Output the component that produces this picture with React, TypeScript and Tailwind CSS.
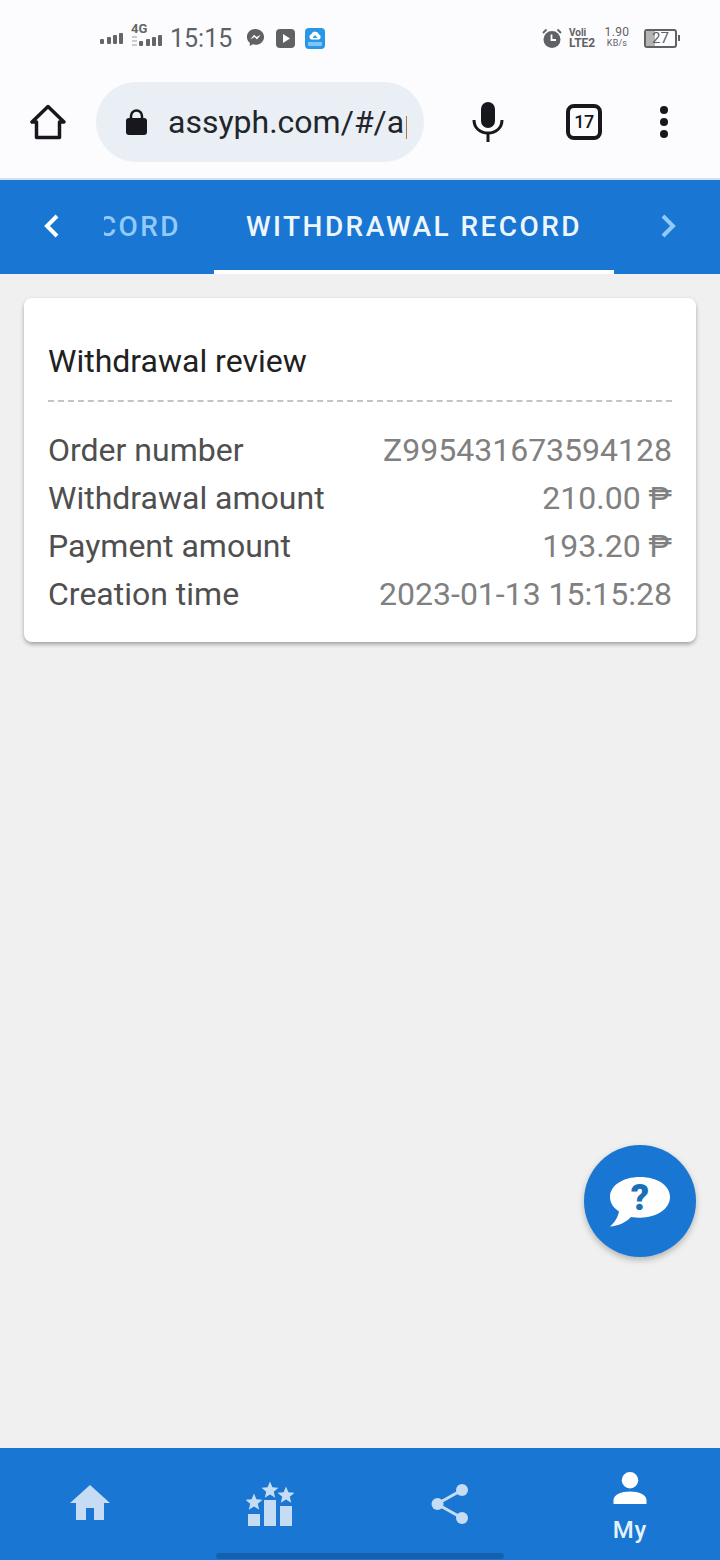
import React from 'react'

const rows = [
  { label: 'Order number', value: 'Z995431673594128' },
  { label: 'Withdrawal amount', value: '210.00 ₱' },
  { label: 'Payment amount', value: '193.20 ₱' },
  { label: 'Creation time', value: '2023-01-13 15:15:28' },
]

const star = 'M0-8.500L2.400-2.800 8.500-2.300 3.800 1.800 5.200 7.800 0 4.600-5.200 7.800-3.800 1.800-8.500-2.300-2.400-2.800z'

function SignalBars({ className }: { className?: string }) {
  return (
    <svg className={className} width="24" height="12" viewBox="0 0 24 12" fill="#666">
      <rect x="0" y="7" width="4" height="5" rx="1" />
      <rect x="7" y="5" width="4" height="7" rx="1" />
      <rect x="13" y="3" width="4" height="9" rx="1" />
      <rect x="19" y="1" width="4" height="11" rx="1" />
    </svg>
  )
}

function StatusBar() {
  return (
    <div className="h-[76px] shrink-0 relative flex items-center justify-between pl-[100px] pr-[40px]">
      <div className="flex items-center">
        <SignalBars />
        <div className="relative w-[40px] h-[24px] ml-[7px]">
          <span className="absolute left-0 top-[-4px] text-[13px] leading-[14px] font-bold text-[#666]">4G</span>
          <svg className="absolute left-[1px] top-[10px]" width="6" height="13" viewBox="0 0 6 13" fill="#ccc">
            <rect x="0" y="0" width="5" height="2" />
            <rect x="0" y="4" width="5" height="2" />
            <rect x="0" y="8" width="5" height="2" />
          </svg>
          <SignalBars className="absolute left-[8px] top-[8px]" />
        </div>
        <span className="text-[25px] leading-none text-[#5f6164] ml-[-1px] w-[61px]">15:15</span>
        <svg className="ml-[15px]" width="19" height="20" viewBox="0 0 20 21">
          <path d="M10 1C4.800 1 1 4.700 1 9.400c0 2.600 1.100 4.700 3 6.200V19l3.200-1.800c.9.300 1.800.4 2.800.4 5.200 0 9-3.700 9-8.200S15.200 1 10 1z" fill="#5f6164" />
          <path d="M4.500 12l4-5 2.500 2.500L15.500 7l-4 5-2.500-2.500z" fill="#fff" />
        </svg>
        <svg className="ml-[11px]" width="19" height="19" viewBox="0 0 19 19">
          <rect width="19" height="19" rx="4" fill="#5f6164" />
          <path d="M7 5l7 4.500L7 14z" fill="#fff" />
        </svg>
        <svg className="ml-[10px]" width="20" height="21" viewBox="0 0 20 21">
          <rect width="20" height="21" rx="4" fill="#2a96e6" />
          <path d="M6 11.500a3 3 0 0 1 .5-5.500 4 4 0 0 1 7.500.5 2.700 2.700 0 0 1 0 5z" fill="#fff" />
          <path d="M10 7l-2.500 3h5z" fill="#2a96e6" />
          <rect x="3" y="14" width="14" height="4" rx="1" fill="#7cc7f5" />
        </svg>
      </div>
      <div className="flex items-center">
        <svg width="20" height="21" viewBox="0 0 20 21">
          <circle cx="10" cy="11.500" r="8.500" fill="#5f6164" />
          <path d="M9.500 6.500v5.500h4.500" stroke="#fff" strokeWidth="1.800" fill="none" />
          <path d="M1 5l3.500-3.500M19 5l-3.500-3.500" stroke="#5f6164" strokeWidth="1.800" />
        </svg>
        <div className="ml-[7px] w-[27px] text-[#5f6164] font-bold">
          <div className="text-[10px] leading-[10px]">Voli</div>
          <div className="text-[12px] leading-[11px] whitespace-nowrap">LTE2</div>
        </div>
        <div className="ml-[9px] w-[24px] flex flex-col items-center text-[#5f6164]">
          <span className="text-[12px] leading-[11px] tracking-[0.4px]">1.90</span>
          <span className="text-[9px] leading-[11px] tracking-[0.2px]">KB/s</span>
        </div>
        <div className="ml-[15px] w-[33px] h-[19px] rounded-[3px] border-2 border-[#5f6164] relative flex items-center justify-center overflow-hidden">
          <div className="absolute left-0 top-0 bottom-0 w-[9px] bg-[#b4b4b4]" />
          <span className="relative text-[15px] leading-none text-[#5f6164]">27</span>
        </div>
        <div className="w-[2px] h-[6px] bg-[#5f6164] ml-[1px]" />
      </div>
    </div>
  )
}

function BrowserBar() {
  return (
    <div className="h-[104px] shrink-0 border-b-2 border-[#cfe0ee] flex items-center pb-[10px]">
      <svg className="ml-[30px]" width="36" height="36" viewBox="0 0 36 36" fill="none" stroke="#16181d" strokeWidth="3.500" strokeLinejoin="round">
        <path d="M18 2.500L2 18h4.500v15.500h23V18H34z" />
      </svg>
      <div className="ml-[30px] w-[328px] h-[80px] rounded-full bg-[#e9eff5] flex items-center pl-[30px]">
        <svg width="21" height="26" viewBox="0 0 21 26">
          <path d="M5 11V7a5.500 5.500 0 0 1 11 0v4" stroke="#16181d" strokeWidth="2.500" fill="none" />
          <rect x="0" y="9" width="21" height="17" rx="3" fill="#16181d" />
        </svg>
        <div className="ml-[21px] w-[239px] overflow-hidden whitespace-nowrap text-[32px] leading-[36px] text-[#22252a]">
          assyph.com/#/app
        </div>
      </div>
      <svg className="ml-[48px]" width="32" height="40" viewBox="0 0 32 40">
        <rect x="9" y="0" width="14" height="26" rx="7" fill="#16181d" />
        <path d="M2 18c0 8 6 13 14 13s14-5 14-13" stroke="#16181d" strokeWidth="3" fill="none" />
        <rect x="14.500" y="30" width="3" height="10" fill="#16181d" />
      </svg>
      <div className="ml-[62px] w-[36px] h-[36px] rounded-[8px] border-4 border-[#16181d] flex items-center justify-center text-[18px] leading-none font-medium text-[#16181d] tracking-[-0.5px]">
        17
      </div>
      <div className="ml-[58px] flex flex-col gap-[4px]">
        <span className="w-[8px] h-[8px] rounded-full bg-[#16181d]" />
        <span className="w-[8px] h-[8px] rounded-full bg-[#16181d]" />
        <span className="w-[8px] h-[8px] rounded-full bg-[#16181d]" />
      </div>
    </div>
  )
}

function Tabs() {
  return (
    <div className="h-[94px] shrink-0 bg-[#1976d2] flex items-center relative overflow-hidden">
      <svg className="ml-[42px] mb-[2px]" width="20" height="26" viewBox="0 0 20 26" fill="none" stroke="#fff" strokeWidth="4">
        <path d="M15 3L5 13l10 10" />
      </svg>
      <div className="ml-[42px] w-[77px] overflow-hidden flex justify-end text-[28px] leading-[32px] font-medium tracking-[2.4px] text-[#90caf9]">
        <span className="whitespace-nowrap">RECORD</span>
      </div>
      <div className="ml-[33px] w-[400px] h-full flex items-center justify-center border-b-4 border-white text-[28px] font-medium leading-none tracking-[2.45px] text-[#eef6fd] whitespace-nowrap pt-[4px]">
        WITHDRAWAL RECORD
      </div>
      <svg className="ml-[44px] mb-[2px]" width="20" height="26" viewBox="0 0 20 26" fill="none" stroke="#90caf9" strokeWidth="4">
        <path d="M5 3l10 10L5 23" />
      </svg>
    </div>
  )
}

function ReviewCard() {
  return (
    <div className="mx-[24px] mt-[24px] h-[344px] rounded-[8px] bg-white shadow-[0_3px_5px_-1px_rgba(0,0,0,0.3),0_1px_4px_rgba(0,0,0,0.12)] px-[24px] pt-[43px]">
      <div className="text-[32px] leading-[40px] text-[#212121]">Withdrawal review</div>
      <div className="mt-[19px] border-b-2 border-dashed border-[#c4c4c4]" />
      <div className="mt-[24px]">
        {rows.map((row) => (
          <div key={row.label} className="flex justify-between h-[48px] items-center text-[32px] leading-none">
            <span className="text-[#4f4f4f]">{row.label}</span>
            <span className="text-[#808080]">{row.value}</span>
          </div>
        ))}
      </div>
    </div>
  )
}

function BottomNav() {
  return (
    <div className="h-[112px] shrink-0 bg-[#1976d2] relative grid grid-cols-4">
      <div className="flex items-center justify-center pb-[2px]">
        <svg width="40" height="36" viewBox="0 0 40 36" fill="#c5dcf4">
          <path d="M20 0L0 18h6v17h10V23h8v12h10V18h6z" />
        </svg>
      </div>
      <div className="flex items-center justify-center">
        <svg width="48" height="46" viewBox="0 0 48 46" fill="#c5dcf4">
          <rect x="2" y="33" width="12" height="12" />
          <rect x="18" y="19" width="12" height="26" />
          <rect x="34" y="25" width="12" height="20" />
          <path d={star} transform="translate(8 21)" />
          <path d={star} transform="translate(24 9)" />
          <path d={star} transform="translate(40 14)" />
        </svg>
      </div>
      <div className="flex items-center justify-center">
        <svg width="38" height="42" viewBox="0 0 38 42" fill="#c5dcf4" stroke="#c5dcf4">
          <path d="M6 21L31 7M6 21l25 14" strokeWidth="3" fill="none" />
          <circle cx="6.500" cy="21" r="6" strokeWidth="0" />
          <circle cx="31" cy="7" r="6" strokeWidth="0" />
          <circle cx="31" cy="35" r="6" strokeWidth="0" />
        </svg>
      </div>
      <div className="flex flex-col items-center pt-[24px]">
        <svg width="34" height="32" viewBox="0 0 34 33" fill="#fff">
          <circle cx="17" cy="8.500" r="8.500" />
          <path d="M0 33v-4c0-6 8-9 17-9s17 3 17 9v4z" />
        </svg>
        <span className="mt-[12px] text-[24px] leading-[28px] font-medium tracking-[1px] text-[#e3f2fd]">My</span>
      </div>
      <div className="absolute left-[216px] bottom-[1px] w-[288px] h-[6px] rounded-full bg-[#1560ac]" />
    </div>
  )
}

export default function App() {
  return (
    <div
      className="w-[720px] h-[1560px] bg-[#f0f0f0] flex flex-col relative overflow-hidden"
      style={{ fontFamily: 'Roboto, "Noto Sans", sans-serif' }}
    >
      <div className="bg-[#fcfcff] shrink-0">
        <StatusBar />
        <BrowserBar />
      </div>
      <Tabs />
      <div className="flex-1">
        <ReviewCard />
      </div>
      <BottomNav />

      {/* Help button */}
      <div className="absolute right-[24px] top-[1145px] w-[112px] h-[112px] rounded-full bg-[#1976d2] shadow-[0_3px_6px_rgba(0,0,0,0.25)]">
        <svg width="60" height="50" viewBox="0 0 60 50" className="absolute left-[26px] top-[32px]">
          <path d="M30 0C13 0 0 8.500 0 20c0 6 3.500 11 9 14.500-1 5-3.500 10-9 15 8-.5 16-4 21-9.500 3 .5 6 .7 9 .7 17 0 30-9 30-20.700S47 0 30 0z" fill="#fff" />
        </svg>
        <span className="absolute left-[26px] top-[33px] w-[60px] text-center text-[36px] leading-[40px] font-black text-[#1a70b8]">?</span>
      </div>
    </div>
  )
}
